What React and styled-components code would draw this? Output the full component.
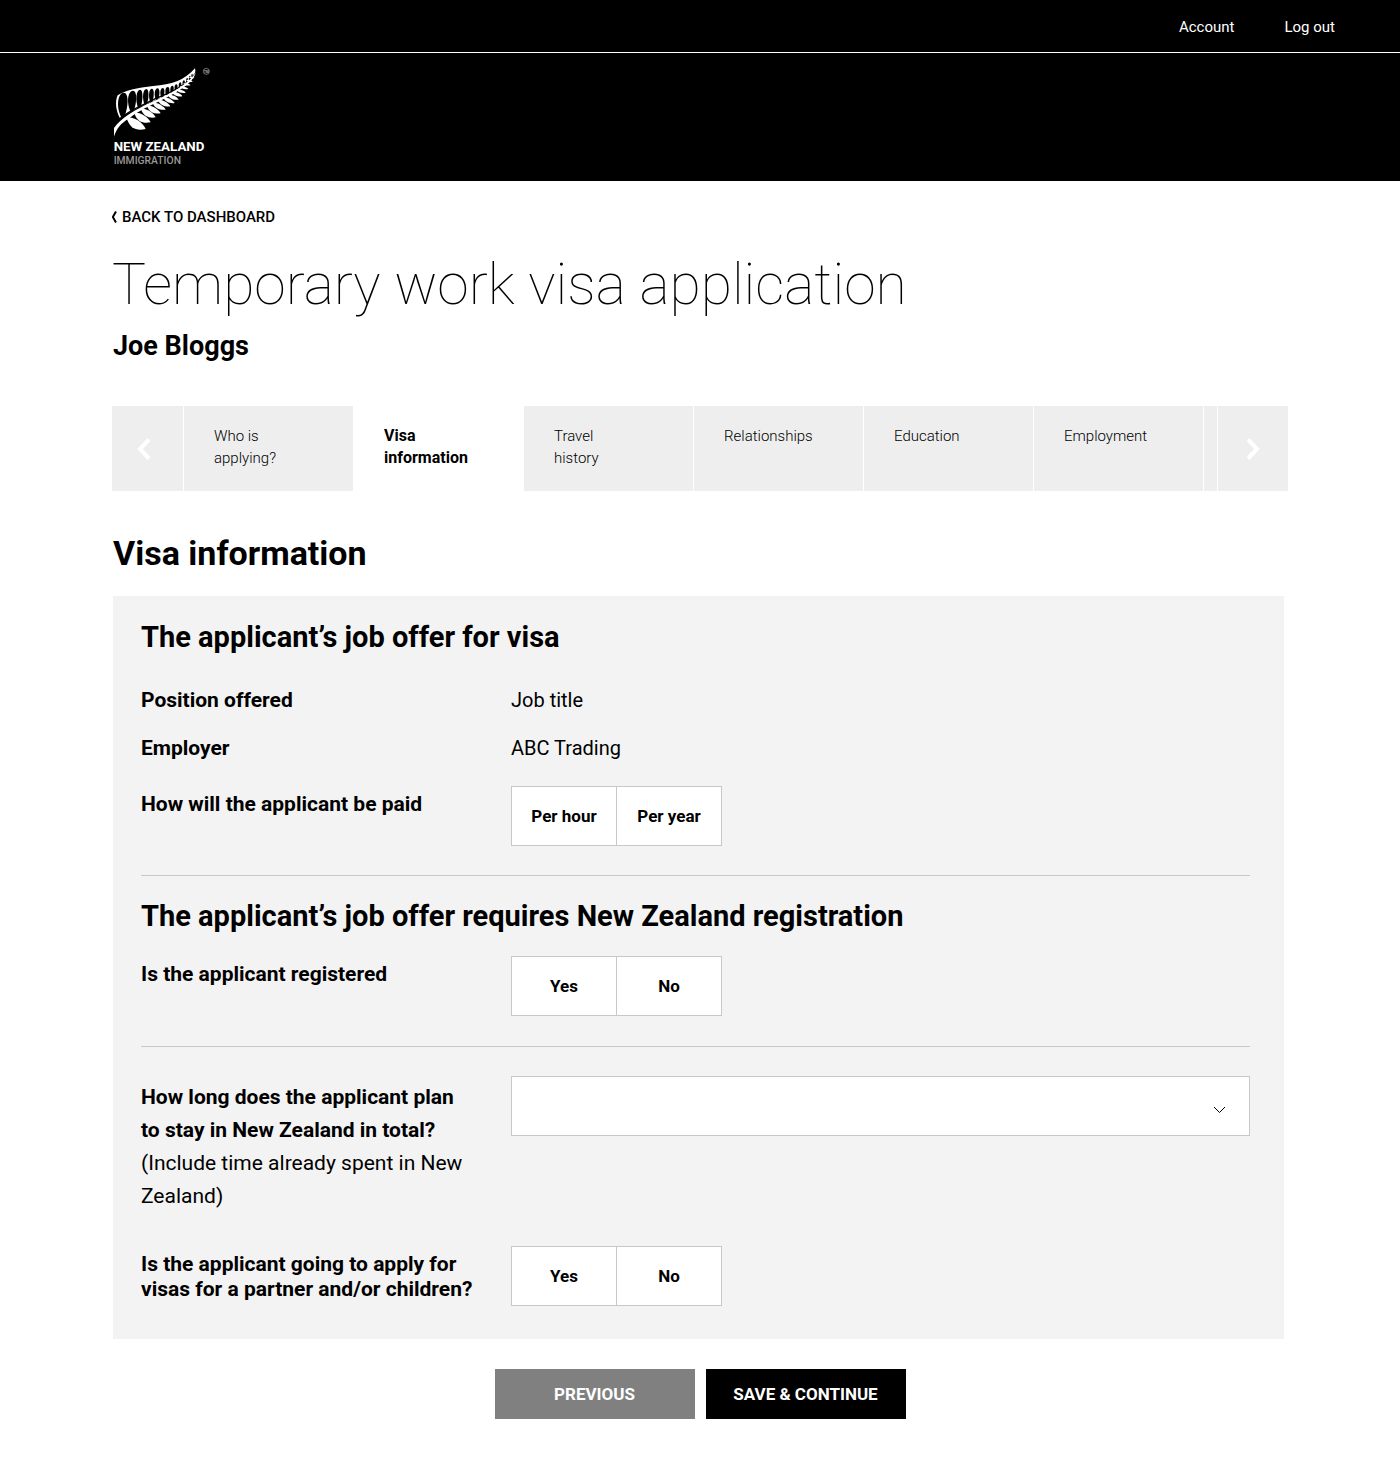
import React, { useState } from "react";
import styled, { createGlobalStyle, css } from "styled-components";

const colors = {
  black: "#000",
  white: "#fff",
  tab: "#eee",
  panel: "#f3f3f3",
  border: "#c8c8c8",
  grey: "#808080",
};

const GlobalStyle = createGlobalStyle`
  * {
    box-sizing: border-box;
  }
  body {
    margin: 0;
    background: ${colors.white};
    color: ${colors.black};
    font-family: Roboto, "Open Sans", sans-serif;
  }
  button,
  select {
    font-family: inherit;
    border-radius: 0;
    cursor: pointer;
  }
`;

const TopBar = styled.nav`
  display: flex;
  justify-content: flex-end;
  align-items: center;
  gap: 50px;
  height: 53px;
  padding: 1px 65px 0;
  background: ${colors.black};
  border-bottom: 1px solid ${colors.white};
  a {
    color: ${colors.white};
    font-size: 15px;
    text-decoration: none;
  }
`;

const Banner = styled.header`
  height: 128px;
  padding: 12px 8%;
  background: ${colors.black};
  svg {
    display: block;
    margin-left: 1px;
  }
`;

const Main = styled.main`
  padding: 24px 8% 59px;
`;

const BackLink = styled.a`
  display: flex;
  align-items: center;
  gap: 5px;
  height: 24px;
  color: ${colors.black};
  font-size: 15px;
  font-weight: 500;
  text-decoration: none;
  text-transform: uppercase;
`;

const Title = styled.h1`
  margin: 18px 0 0;
  font-size: 57px;
  line-height: 76px;
  font-weight: 100;
`;

const Applicant = styled.p`
  margin: 3px 0 40px;
  padding-left: 1px;
  font-size: 27px;
  line-height: 40px;
  font-weight: 700;
`;

const Steps = styled.div`
  display: flex;
  gap: 1px;
  height: 85px;
`;

const StepArrow = styled.button`
  flex: 0 0 ${({ $width }) => $width}px;
  display: flex;
  align-items: center;
  justify-content: center;
  padding: 0;
  border: 0;
  background: ${colors.tab};
`;

const StepList = styled.ol`
  flex: 1;
  display: flex;
  gap: 1px;
  min-width: 0;
  margin: 0;
  padding: 0;
  list-style: none;
  overflow: hidden;
`;

const Step = styled.li`
  flex: 0 0 169px;
  min-width: 0;
  background: ${colors.tab};
  a {
    display: block;
    height: 100%;
    padding: 19px 54px 0 30px;
    color: ${colors.black};
    font-size: 15px;
    line-height: 22px;
    font-weight: 300;
    text-decoration: none;
  }
  ${({ $active }) =>
    $active &&
    css`
      background: ${colors.white};
      a {
        font-size: 16px;
        font-weight: 700;
      }
    `}
`;

const SectionTitle = styled.h2`
  margin: 38px 0 19px;
  padding-left: 1px;
  font-size: 34px;
  line-height: 48px;
  font-weight: 700;
`;

const Panel = styled.form`
  margin: 0 4px 0 1px;
  padding: 21px 34px 33px 28px;
  background: ${colors.panel};
`;

const PanelTitle = styled.h3`
  margin: 0 0 ${({ $gap }) => $gap}px;
  font-size: 29px;
  line-height: 40px;
  font-weight: 700;
`;

const Row = styled.div`
  display: grid;
  grid-template-columns: 334px 1fr;
  column-gap: 36px;
  margin-bottom: ${({ $gap }) => $gap || 0}px;
  font-size: 21px;
`;

const Value = styled.div`
  font-size: 20px;
  line-height: 48px;
`;

const Label = styled.div`
  padding-top: ${({ $top }) => $top || 0}px;
  line-height: ${({ $line }) => $line || 48}px;
  font-weight: 700;
  span {
    display: block;
    font-weight: 400;
  }
`;

const Divider = styled.hr`
  height: 1px;
  margin: 0 0 ${({ $gap }) => $gap}px;
  border: 0;
  background: ${colors.border};
`;

const Toggle = styled.div`
  display: flex;
  width: 211px;
  height: 60px;
  border: 1px solid ${colors.border};
  background: ${colors.white};
`;

const ToggleButton = styled.button`
  flex: 1;
  padding: 0;
  border: 0;
  background: ${({ $selected }) => ($selected ? colors.tab : colors.white)};
  color: ${colors.black};
  font-size: 17px;
  font-weight: 700;
  & + & {
    border-left: 1px solid ${colors.border};
  }
`;

const SelectBox = styled.div`
  position: relative;
  height: 60px;
  select {
    display: block;
    width: 100%;
    height: 100%;
    padding: 0 60px 0 20px;
    border: 1px solid ${colors.border};
    background: ${colors.white};
    font-size: 17px;
    appearance: none;
  }
  svg {
    position: absolute;
    top: 30px;
    right: 24px;
    pointer-events: none;
  }
`;

const Actions = styled.div`
  display: flex;
  justify-content: center;
  gap: 11px;
  margin-top: 30px;
`;

const ActionButton = styled.button`
  width: 200px;
  height: 50px;
  padding: 0;
  border: 0;
  background: ${({ $primary }) => ($primary ? colors.black : colors.grey)};
  color: ${colors.white};
  font-size: 17px;
  font-weight: 700;
  text-transform: uppercase;
`;

const steps = [
  "Who is applying?",
  "Visa information",
  "Travel history",
  "Relationships",
  "Education",
  "Employment",
  "",
];

// gaps between the upper fronds: centre x, top, bottom, half width
const gaps = [
  [68, 113, 186, 14],
  [96, 107, 170, 12],
  [118, 104, 160, 9],
  [137, 102, 151, 8],
  [154, 101, 144, 7],
  [171, 100, 137, 7],
  [187, 99, 130, 6],
  [202, 96, 124, 6],
  [216, 92, 118, 5],
  [228, 88, 111, 4.5],
  [240, 82, 104, 4],
  [251, 76, 96, 3.5],
  [261, 69, 88, 3],
  [269, 62, 79, 2.5],
  [276, 56, 70, 2],
];

// lower fronds: base x, base y, tip x, tip y, thickness
const fronds = [
  [80, 189, 137, 222, 25],
  [103, 174, 152, 202, 20],
  [123, 162, 167, 187, 17],
  [141, 152, 182, 175, 15],
  [158, 143, 197, 164, 13],
  [174, 135, 211, 154, 12],
  [190, 127, 224, 144, 11],
  [204, 119, 236, 134, 10],
  [217, 111, 247, 124, 9],
  [229, 103, 257, 113, 8],
  [240, 94, 265, 102, 7],
  [250, 85, 272, 91, 6],
  [259, 75, 278, 80, 5],
  [267, 66, 283, 69, 4],
];

const Logo = () => (
  <svg width="100" height="104" viewBox="39 30 300 312" role="img" aria-label="New Zealand Immigration">
    <path
      fill="#fff"
      d="M60 190C48 168 44 140 53 121C72 107 112 98 160 93C215 88 252 78 285 40C289 54 281 70 266 84C240 110 195 122 150 142C115 157 84 172 60 190Z"
    />
    {gaps.map(([x, top, bottom, r]) => (
      <path
        key={x}
        d={`M${x - r / 3} ${bottom}C${x - r * 1.5} ${bottom - (bottom - top) * 0.45} ${x - r} ${top} ${x + r / 4} ${top}C${x + r * 1.3} ${top} ${x + r * 1.3} ${bottom - (bottom - top) * 0.45} ${x + r / 3} ${bottom}Z`}
      />
    ))}
    <path
      d="M54 196C85 166 125 152 160 134C205 114 255 97 286 56"
      fill="none"
      stroke="#000"
      strokeWidth="4"
    />
    <path
      fill="#fff"
      d="M42 245V219C65 188 98 170 130 153C185 126 248 105 287 54C280 82 232 113 175 140C135 158 106 174 86 191C64 203 49 221 42 245Z"
    />
    {fronds.map(([x, y, tx, ty, t]) => (
      <path
        key={x}
        fill="#fff"
        d={`M${x} ${y}C${x + t * 0.7} ${y - t * 0.25} ${tx - t * 0.4} ${ty - t * 0.9} ${tx} ${ty}C${tx - t} ${ty + t * 0.2} ${x + t * 0.4} ${y + t * 1.4} ${x} ${y}Z`}
      />
    ))}
    <circle cx="319" cy="49" r="9" fill="none" stroke="#aaa" strokeWidth="2" />
    <text x="319" y="53" fill="#bbb" fontSize="9" fontWeight="700" textAnchor="middle">TM</text>
    <text x="41" y="289" fill="#fff" fontSize="40" fontWeight="700">NEW ZEALAND</text>
    <text x="41" y="326" fill="#999" fontSize="31" fontWeight="500">IMMIGRATION</text>
  </svg>
);

const Choice = ({ label, options }) => {
  const [value, setValue] = useState(null);
  return (
    <Toggle role="group" aria-label={label}>
      {options.map((option) => (
        <ToggleButton
          key={option}
          type="button"
          $selected={value === option}
          onClick={() => setValue(option)}
        >
          {option}
        </ToggleButton>
      ))}
    </Toggle>
  );
};

const App = () => {
  return (
    <>
      <GlobalStyle />
      <TopBar>
        <a href="#account">Account</a>
        <a href="#logout">Log out</a>
      </TopBar>
      <Banner>
        <Logo />
      </Banner>
      <Main>
        <BackLink href="#dashboard">
          <svg width="5" height="12" viewBox="0 0 5 12" fill="none" stroke="#000" strokeWidth="2">
            <path d="M4 .5L.8 6L4 11.5" />
          </svg>
          Back to dashboard
        </BackLink>
        <Title>Temporary work visa application</Title>
        <Applicant>Joe Bloggs</Applicant>
        <Steps>
          <StepArrow type="button" aria-label="Previous steps" $width={71}>
            <svg width="22" height="22" viewBox="0 0 22 22" fill="none" stroke="#fff" strokeWidth="4">
              <path d="M12 1.5L3 11L12 20.5" />
            </svg>
          </StepArrow>
          <StepList>
            {steps.map((step) => (
              <Step key={step} $active={step === "Visa information"}>
                {step && <a href="#step">{step}</a>}
              </Step>
            ))}
          </StepList>
          <StepArrow type="button" aria-label="Next steps" $width={70}>
            <svg width="14" height="22" viewBox="0 0 14 22" fill="none" stroke="#fff" strokeWidth="4">
              <path d="M2 1.5L11 11L2 20.5" />
            </svg>
          </StepArrow>
        </Steps>
        <SectionTitle>Visa information</SectionTitle>
        <Panel>
          <PanelTitle $gap={19}>The applicant’s job offer for visa</PanelTitle>
          <Row>
            <Label>Position offered</Label>
            <Value>Job title</Value>
          </Row>
          <Row $gap={14}>
            <Label>Employer</Label>
            <Value>ABC Trading</Value>
          </Row>
          <Row $gap={29}>
            <Label $top={6} $line={25}>How will the applicant be paid</Label>
            <Choice label="How will the applicant be paid" options={["Per hour", "Per year"]} />
          </Row>
          <Divider $gap={20} />
          <PanelTitle $gap={20}>The applicant’s job offer requires New Zealand registration</PanelTitle>
          <Row $gap={30}>
            <Label $top={6} $line={25}>Is the applicant registered</Label>
            <Choice label="Is the applicant registered" options={["Yes", "No"]} />
          </Row>
          <Divider $gap={29} />
          <Row $gap={33}>
            <Label as="label" htmlFor="stay" $top={5} $line={33}>
              How long does the applicant plan to stay in New Zealand in total?
              <span>(Include time already spent in New Zealand)</span>
            </Label>
            <SelectBox>
              <select id="stay" />
              <svg width="13" height="8" viewBox="0 0 13 8" fill="none" stroke="#000">
                <path d="M1 1L6.5 6.5L12 1" />
              </svg>
            </SelectBox>
          </Row>
          <Row>
            <Label $top={6} $line={25}>
              Is the applicant going to apply for visas for a partner and/or children?
            </Label>
            <Choice label="Visas for a partner and/or children" options={["Yes", "No"]} />
          </Row>
        </Panel>
        <Actions>
          <ActionButton type="button">Previous</ActionButton>
          <ActionButton type="button" $primary>
            Save &amp; continue
          </ActionButton>
        </Actions>
      </Main>
    </>
  );
};

export default App;
